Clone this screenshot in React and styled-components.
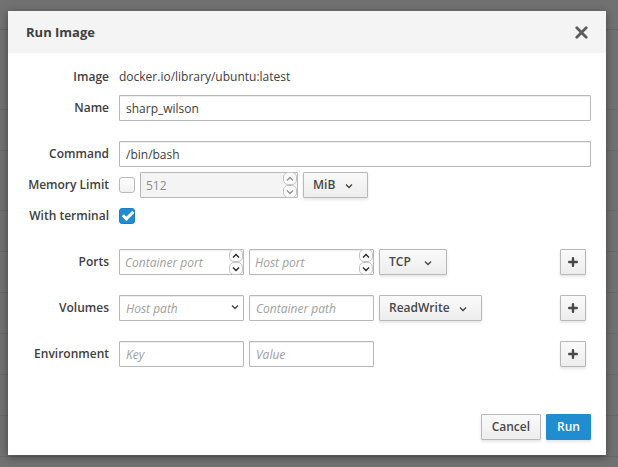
import React from "react";
import styled, { createGlobalStyle, css } from "styled-components";

const GlobalStyle = createGlobalStyle`
  *, *::before, *::after { box-sizing: border-box; }
  body {
    margin: 0;
    background: #717171;
    color: #404040;
    font: 12px/20px "Open Sans", "Noto Sans", sans-serif;
  }
  button, input, select { font: inherit; color: inherit; margin: 0; }
`;

const Backdrop = styled.div`
  min-height: 100vh;
  padding: 11px 12px 12px 8px;
  background:
    linear-gradient(#646464, #646464) 0 29px / 100% 1px no-repeat,
    linear-gradient(#686868, #686868) 0 109px / 100% 1px no-repeat,
    linear-gradient(#686868, #686868) 0 150px / 100% 1px no-repeat,
    repeating-linear-gradient(#686868 0 1px, #717171 1px 41px) 0 210px no-repeat,
    #717171;
`;

const Dialog = styled.section`
  background: #fff;
  box-shadow: 0 2px 8px rgba(0, 0, 0, 0.4);
`;

const Header = styled.header`
  display: flex;
  align-items: center;
  justify-content: space-between;
  height: 42px;
  padding: 0 18px;
  background: #f4f4f4;
`;

const Title = styled.h1`
  margin: 0;
  font-size: 13px;
  font-weight: 700;
`;

const CloseButton = styled.button`
  display: flex;
  padding: 0;
  border: 0;
  background: none;
  color: #5c5c5c;
`;

const Form = styled.form`
  display: flex;
  flex-direction: column;
  gap: 20px;
  padding: 11px 15px 0;
`;

const Group = styled.div`
  display: flex;
  flex-direction: column;
  gap: 5px;
`;

const RowShell = styled.div`
  display: grid;
  grid-template-columns: 86px minmax(0, 1fr);
  column-gap: 10px;
  align-items: center;
  min-height: 26px;
`;

const Label = styled.label`
  font-weight: 600;
  text-align: right;
  white-space: nowrap;
  justify-self: end;
`;

const Controls = styled.div`
  display: flex;
  align-items: center;
  gap: 5px;
`;

const inputStyle = css`
  width: 100%;
  min-width: 0;
  height: 26px;
  padding: 0 6px;
  border: 1px solid #b8b8b8;
  border-radius: 1px;
  background: #fff;
  box-shadow: inset 0 1px 1px rgba(3, 3, 3, 0.075);
  appearance: textfield;
  &::placeholder { color: #a0a0a0; font-style: italic; opacity: 1; }
  &::-webkit-inner-spin-button { appearance: none; margin: 0; }
  &:disabled { background: #f4f4f4; color: #8b8d8f; box-shadow: none; }
`;

const TextInput = styled.input`
  ${inputStyle}
  &[type="number"] { padding: 0 5px; }
`;

const Field = styled.div`
  position: relative;
  display: flex;
  flex: 0 1 ${(p) => p.$width}px;
`;

const Spinner = styled.div`
  position: absolute;
  top: 0;
  right: 1px;
  display: flex;
  flex-direction: column;
`;

const SpinButton = styled.button`
  display: flex;
  align-items: center;
  justify-content: center;
  width: 14px;
  height: 13px;
  padding: 0;
  border: 1px solid #c4c4c4;
  border-radius: 5px;
  background: #fafafa;
  color: #222;
  &:disabled { color: #8b8d8f; }
`;

const ComboToggle = styled.button`
  position: absolute;
  inset: 0 1px 2px auto;
  display: flex;
  align-items: center;
  justify-content: center;
  width: 16px;
  padding: 0;
  border: 0;
  background: none;
`;

const buttonStyle = css`
  height: 26px;
  border: 1px solid #b8b8b8;
  border-radius: 1px;
  background: linear-gradient(#fafafa, #ededed);
  box-shadow: 0 2px 3px rgba(3, 3, 3, 0.1);
  color: #484848;
  font-weight: 600;
`;

const Select = styled.select`
  ${buttonStyle}
  appearance: none;
  width: 100%;
  padding: 0 9px;
`;

const SelectArrow = styled.span`
  position: absolute;
  inset: 2px 15px 0 auto;
  display: flex;
  align-items: center;
  pointer-events: none;
`;

const AddButton = styled.button`
  ${buttonStyle}
  display: flex;
  align-items: center;
  justify-content: center;
  width: 26px;
  margin: 0 5px 0 auto;
  padding: 0;
`;

const Check = styled.input`
  appearance: none;
  display: block;
  width: 16px;
  height: 16px;
  border: 1px solid #b8b8b8;
  border-radius: 3px;
  background: linear-gradient(#fff, #f1f1f1);
  &:checked { border-color: #1b7fbd; background: #1f8dd0; }
`;

const CheckBox = styled.span`
  position: relative;
  display: block;
  svg { position: absolute; inset: 0; pointer-events: none; }
`;

const MemoryControls = styled(Controls)`
  flex: 1;
`;

const Footer = styled.footer`
  display: flex;
  justify-content: flex-end;
  gap: 5px;
  padding: 47px 15px 15px;
`;

const ActionButton = styled.button`
  ${buttonStyle}
  padding: 0 10px;
  ${(p) => p.$primary && css`
    border-color: #1f8dd0;
    background: #1f8dd0;
    color: #fff;
  `}
`;

const Chevron = ({ up = false }) => (
  <svg width="8" height="8" viewBox="0 0 8 8" fill="none" stroke="currentColor" strokeWidth="1.3" aria-hidden="true">
    <path d={up ? "M1 5.5 4 2.5 7 5.5" : "M1 2.5 4 5.5 7 2.5"} />
  </svg>
);

const Plus = () => (
  <svg width="10" height="10" viewBox="0 0 10 10" fill="none" stroke="currentColor" strokeWidth="2.4" strokeLinecap="round" aria-hidden="true">
    <path d="M5 1.2V8.8M1.2 5H8.8" />
  </svg>
);

const Row = ({ id, label, children }) => (
  <RowShell>
    <Label htmlFor={id}>{label}</Label>
    <Controls>{children}</Controls>
  </RowShell>
);

const NumberField = ({ width, disabled, label, ...rest }) => (
  <Field $width={width}>
    <TextInput type="number" disabled={disabled} aria-label={label} {...rest} />
    <Spinner>
      <SpinButton type="button" disabled={disabled} aria-label={`Increase ${label}`}><Chevron up /></SpinButton>
      <SpinButton type="button" disabled={disabled} aria-label={`Decrease ${label}`}><Chevron /></SpinButton>
    </Spinner>
  </Field>
);

const Dropdown = ({ width, label, options }) => (
  <Field $width={width}>
    <Select aria-label={label}>
      {options.map((o) => <option key={o}>{o}</option>)}
    </Select>
    <SelectArrow><Chevron /></SelectArrow>
  </Field>
);

export default function App() {
  return (
    <>
      <GlobalStyle />
      <Backdrop>
        <Dialog role="dialog" aria-labelledby="title">
          <Header>
            <Title id="title">Run Image</Title>
            <CloseButton type="button" aria-label="Close">
              <svg width="13" height="13" viewBox="0 0 13 13" fill="none" stroke="currentColor" strokeWidth="2.8" strokeLinecap="round">
                <path d="M1.8 1.8 11.2 11.2M11.2 1.8 1.8 11.2" />
              </svg>
            </CloseButton>
          </Header>
          <Form id="run-form">
            <Group>
              <Row id="image" label="Image"><output id="image">docker.io/library/ubuntu:latest</output></Row>
              <Row id="name" label="Name"><TextInput id="name" defaultValue="sharp_wilson" /></Row>
            </Group>
            <Group>
              <Row id="command" label="Command"><TextInput id="command" defaultValue="/bin/bash" /></Row>
              <Row id="memory" label="Memory Limit">
                <CheckBox><Check type="checkbox" id="memory" /></CheckBox>
                <MemoryControls>
                  <NumberField width={158} label="memory" defaultValue={512} disabled />
                  <Dropdown width={65} label="Memory unit" options={["MiB", "GiB"]} />
                </MemoryControls>
              </Row>
              <Row id="terminal" label="With terminal">
                <CheckBox>
                  <Check type="checkbox" id="terminal" defaultChecked />
                  <svg width="16" height="16" viewBox="0 0 16 16" fill="none" stroke="#fff" strokeWidth="3" aria-hidden="true">
                    <path d="M3.8 7.2 7.4 10.8 14.4 3.8" />
                  </svg>
                </CheckBox>
              </Row>
            </Group>
            <Row id="container-port" label="Ports">
              <NumberField width={125} id="container-port" label="container port" placeholder="Container port" />
              <NumberField width={125} label="host port" placeholder="Host port" />
              <Dropdown width={68} label="Protocol" options={["TCP", "UDP"]} />
              <AddButton type="button" aria-label="Add port"><Plus /></AddButton>
            </Row>
            <Row id="host-path" label="Volumes">
              <Field $width={125}>
                <TextInput id="host-path" placeholder="Host path" />
                <ComboToggle type="button" aria-label="Show paths"><Chevron /></ComboToggle>
              </Field>
              <Field $width={125}><TextInput aria-label="Container path" placeholder="Container path" /></Field>
              <Dropdown width={103} label="Mode" options={["ReadWrite", "ReadOnly"]} />
              <AddButton type="button" aria-label="Add volume"><Plus /></AddButton>
            </Row>
            <Row id="env-key" label="Environment">
              <Field $width={125}><TextInput id="env-key" placeholder="Key" /></Field>
              <Field $width={125}><TextInput aria-label="Value" placeholder="Value" /></Field>
              <AddButton type="button" aria-label="Add variable"><Plus /></AddButton>
            </Row>
          </Form>
          <Footer>
            <ActionButton type="button">Cancel</ActionButton>
            <ActionButton type="submit" form="run-form" $primary>Run</ActionButton>
          </Footer>
        </Dialog>
      </Backdrop>
    </>
  );
}
